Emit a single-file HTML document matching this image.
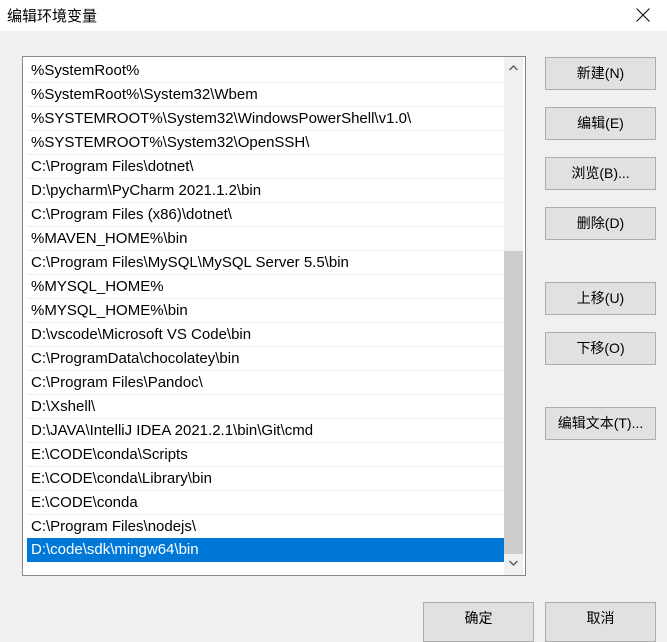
<!DOCTYPE html>
<html><head><meta charset="utf-8"><style>
*{margin:0;padding:0;box-sizing:border-box}
body{width:667px;height:633px;background:#f0f0f0;font-family:"Liberation Sans","Noto Sans CJK SC",sans-serif;font-size:15px;color:#000;position:relative;overflow:hidden}
.title{position:absolute;left:0;top:0;width:667px;height:31px;background:#fff}
.title span{position:absolute;left:7px;top:5px;font-size:15px}
.list{position:absolute;left:22px;top:56px;width:504px;height:520px;border:1px solid #828790;background:#fff}
.row{position:absolute;left:4px;width:477px;height:24px;line-height:24px;padding-left:4px;border-bottom:1px solid #efefef;white-space:nowrap}
.sel{background:#0078d7;color:#fff;border-bottom:none}
.sb{position:absolute;left:481px;top:0;width:19px;height:518px;background:#f0f0f0}
.thumb{position:absolute;left:0;top:194px;width:19px;height:303px;background:#cdcdcd}
.btn{position:absolute;left:545px;width:111px;height:33px;background:#e1e1e1;border:1px solid #adadad;text-align:center;line-height:31px;font-size:14px}
</style></head><body>
<div class="title"><span>编辑环境变量</span>
<svg style="position:absolute;left:636px;top:8px" width="14" height="14"><path d="M0.5 0.5L13.5 13.5M13.5 0.5L0.5 13.5" stroke="#000" stroke-width="1"/></svg></div>
<div class="list">
<div class="row" style="top:2px">%SystemRoot%</div>
<div class="row" style="top:26px">%SystemRoot%\System32\Wbem</div>
<div class="row" style="top:50px">%SYSTEMROOT%\System32\WindowsPowerShell\v1.0\</div>
<div class="row" style="top:74px">%SYSTEMROOT%\System32\OpenSSH\</div>
<div class="row" style="top:98px">C:\Program Files\dotnet\</div>
<div class="row" style="top:122px">D:\pycharm\PyCharm 2021.1.2\bin</div>
<div class="row" style="top:146px">C:\Program Files (x86)\dotnet\</div>
<div class="row" style="top:170px">%MAVEN_HOME%\bin</div>
<div class="row" style="top:194px">C:\Program Files\MySQL\MySQL Server 5.5\bin</div>
<div class="row" style="top:218px">%MYSQL_HOME%</div>
<div class="row" style="top:242px">%MYSQL_HOME%\bin</div>
<div class="row" style="top:266px">D:\vscode\Microsoft VS Code\bin</div>
<div class="row" style="top:290px">C:\ProgramData\chocolatey\bin</div>
<div class="row" style="top:314px">C:\Program Files\Pandoc\</div>
<div class="row" style="top:338px">D:\Xshell\</div>
<div class="row" style="top:362px">D:\JAVA\IntelliJ IDEA 2021.2.1\bin\Git\cmd</div>
<div class="row" style="top:386px">E:\CODE\conda\Scripts</div>
<div class="row" style="top:410px">E:\CODE\conda\Library\bin</div>
<div class="row" style="top:434px">E:\CODE\conda</div>
<div class="row" style="top:458px">C:\Program Files\nodejs\</div>
<div class="row sel" style="top:481px">D:\code\sdk\mingw64\bin</div>
<div class="sb"><div class="thumb"></div>
<svg style="position:absolute;left:5px;top:8px" width="9" height="6"><path d="M0.5 5L4.5 1L8.5 5" stroke="#606060" stroke-width="1.5" fill="none"/></svg>
<svg style="position:absolute;left:5px;top:503px" width="9" height="6"><path d="M0.5 1L4.5 5L8.5 1" stroke="#606060" stroke-width="1.5" fill="none"/></svg>
</div>
</div>
<div class="btn" style="top:57px">新建(N)</div>
<div class="btn" style="top:107px">编辑(E)</div>
<div class="btn" style="top:157px">浏览(B)...</div>
<div class="btn" style="top:207px">删除(D)</div>
<div class="btn" style="top:282px">上移(U)</div>
<div class="btn" style="top:332px">下移(O)</div>
<div class="btn" style="top:407px">编辑文本(T)...</div>
<div class="btn" style="left:423px;top:602px;height:40px">确定</div>
<div class="btn" style="top:602px;height:40px">取消</div>
</body></html>
